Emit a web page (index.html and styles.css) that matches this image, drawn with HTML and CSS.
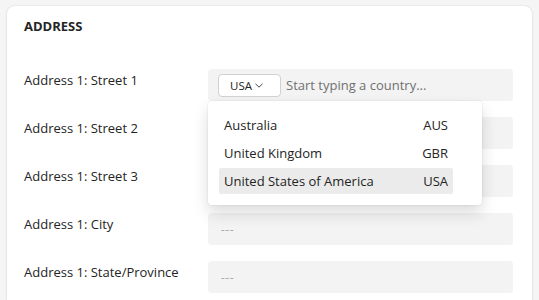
FILE: index.html
```html
<!DOCTYPE html>
<html>
<head>
<meta charset="utf-8">
<link rel="stylesheet" href="styles.css">
</head>
<body>
<div class="card">
  <h2 class="title">ADDRESS</h2>
  <div class="rows">
    <div class="row">
      <div class="label">Address 1: Street 1</div>
      <div class="field-wrap">
        <div class="input country">
          <button class="code-btn">USA<svg class="chev" width="8" height="5" viewBox="0 0 8 5"><path d="M0.5 0.8 L4 4.2 L7.5 0.8" fill="none" stroke="#333" stroke-width="0.9"/></svg></button>
          <span class="placeholder-dark">Start typing a country...</span>
        </div>
        <div class="popover">
          <div class="opt"><span>Australia</span><span>AUS</span></div>
          <div class="opt"><span>United Kingdom</span><span>GBR</span></div>
          <div class="opt sel"><span>United States of America</span><span>USA</span></div>
        </div>
      </div>
    </div>
    <div class="row">
      <div class="label">Address 1: Street 2</div>
      <div class="input"><span class="ph">---</span></div>
    </div>
    <div class="row">
      <div class="label">Address 1: Street 3</div>
      <div class="input"><span class="ph">---</span></div>
    </div>
    <div class="row">
      <div class="label">Address 1: City</div>
      <div class="input"><span class="ph">---</span></div>
    </div>
    <div class="row">
      <div class="label">Address 1: State/Province</div>
      <div class="input"><span class="ph">---</span></div>
    </div>
  </div>
</div>
</body>
</html>
```
FILE: styles.css
```css
html, body {
  margin: 0;
  padding: 0;
  background: #f5f5f5;
  font-family: "Open Sans", "Noto Sans", sans-serif;
  color: #242424;
}
body {
  padding: 6px 7px 0 7px;
  height: 300px;
  box-sizing: border-box;
  overflow: hidden;
}
.card {
  background: #fff;
  border-radius: 8px 8px 0 0;
  box-shadow: 0 0 2px rgba(0,0,0,0.12), 0 1px 3px rgba(0,0,0,0.08);
  padding: 10px 19px 0 17px;
  height: 294px;
  box-sizing: border-box;
}
.title {
  margin: 0;
  font-size: 13px;
  font-weight: 700;
  line-height: 20px;
}
.rows {
  margin-top: 33px;
  display: flex;
  flex-direction: column;
  gap: 16px;
}
.row {
  display: flex;
  align-items: flex-start;
  height: 32px;
}
.label {
  width: 184px;
  font-size: 13px;
  line-height: 20px;
  padding-top: 1px;
}
.field-wrap {
  position: relative;
  flex: 1;
}
.input {
  flex: 1;
  height: 32px;
  background: #f3f3f3;
  border-radius: 4px;
  display: flex;
  align-items: center;
  padding-left: 13px;
  box-sizing: border-box;
}
.input.country {
  padding-left: 10px;
}
.ph {
  color: #a8a8a8;
  font-size: 12px;
  letter-spacing: 0.5px;
}
.code-btn {
  height: 23px;
  width: 63px;
  border: 1px solid #d1d1d1;
  border-radius: 4px;
  background: #fff;
  font-family: inherit;
  font-size: 11.5px;
  color: #242424;
  display: flex;
  align-items: center;
  justify-content: center;
  gap: 3px;
  padding: 0 6px 0 0;
  margin-right: 5px;
}
.chev { margin-top: 1px; }
.placeholder-dark {
  color: #707070;
  font-size: 13px;
}
.popover {
  position: absolute;
  left: 0;
  top: 32px;
  width: 274px;
  background: #fff;
  border-radius: 4px;
  box-shadow: 0 0 2px rgba(0,0,0,0.12), 0 8px 16px rgba(0,0,0,0.14);
  padding: 11px 29px 11px 11px;
  box-sizing: border-box;
  display: flex;
  flex-direction: column;
  gap: 2px;
  z-index: 2;
}
.opt {
  height: 26px;
  display: flex;
  align-items: center;
  justify-content: space-between;
  padding: 0 5px;
  font-size: 13px;
  border-radius: 2px;
}
.opt.sel {
  background: #ebebeb;
}
```
